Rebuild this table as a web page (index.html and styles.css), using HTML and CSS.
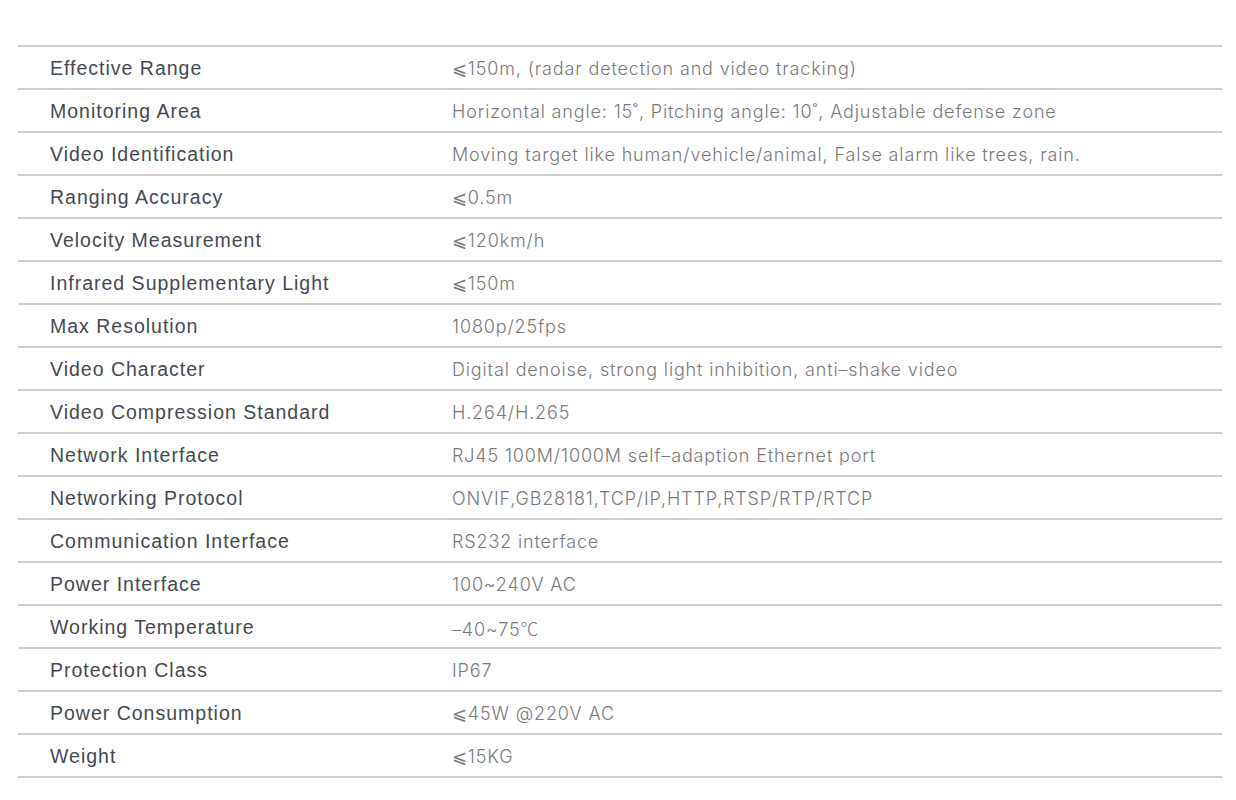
FILE: index.html
```html
<!DOCTYPE html>
<html lang="en">
<head>
<meta charset="utf-8">
<title>Specifications</title>
<link rel="stylesheet" href="styles.css">
</head>
<body>
<div class="spec">
  <div class="row"><div class="k">Effective Range</div><div class="v">⩽150m, (radar detection and video tracking)</div></div>
  <div class="row"><div class="k">Monitoring Area</div><div class="v">Horizontal angle: 15˚, Pitching angle: 10˚, Adjustable defense zone</div></div>
  <div class="row"><div class="k">Video Identification</div><div class="v">Moving target like human/vehicle/animal, False alarm like trees, rain.</div></div>
  <div class="row"><div class="k">Ranging Accuracy</div><div class="v">⩽0.5m</div></div>
  <div class="row"><div class="k">Velocity Measurement</div><div class="v">⩽120km/h</div></div>
  <div class="row"><div class="k">Infrared Supplementary Light</div><div class="v">⩽150m</div></div>
  <div class="row"><div class="k">Max Resolution</div><div class="v">1080p/25fps</div></div>
  <div class="row"><div class="k">Video Character</div><div class="v">Digital denoise, strong light inhibition, anti–shake video</div></div>
  <div class="row"><div class="k">Video Compression Standard</div><div class="v">H.264/H.265</div></div>
  <div class="row"><div class="k">Network Interface</div><div class="v">RJ45 100M/1000M self–adaption Ethernet port</div></div>
  <div class="row"><div class="k">Networking Protocol</div><div class="v">ONVIF,GB28181,TCP/IP,HTTP,RTSP/RTP/RTCP</div></div>
  <div class="row"><div class="k">Communication Interface</div><div class="v">RS232 interface</div></div>
  <div class="row"><div class="k">Power Interface</div><div class="v">100~240V AC</div></div>
  <div class="row"><div class="k">Working Temperature</div><div class="v">–40~75<span class="deg">℃</span></div></div>
  <div class="row"><div class="k">Protection Class</div><div class="v">IP67</div></div>
  <div class="row"><div class="k">Power Consumption</div><div class="v">⩽45W @220V AC</div></div>
  <div class="row"><div class="k">Weight</div><div class="v">⩽15KG</div></div>
</div>
</body>
</html>
```
FILE: styles.css
```css
html, body {
  margin: 0;
  padding: 0;
  background: #ffffff;
}
body {
  padding: 45px 14px 0 18px;
  font-family: "Liberation Sans", Arial, sans-serif;
}
.spec {
  border-top: 2px solid #cdcdcd;
}
.row {
  display: grid;
  grid-template-columns: 434px 1fr;
  align-items: center;
  height: 41px;
  border-bottom: 2px solid #cdcdcd;
}
.k {
  padding-top: 2px;
  padding-left: 32px;
  font-size: 19.5px;
  letter-spacing: 1px;
  color: #454a52;
}
.v {
  padding-top: 2px;
  font-family: "Inter", "Liberation Sans", sans-serif;
  font-size: 18px;
  font-weight: 300;
  letter-spacing: 0.85px;
  color: #7a7a7a;
}
.deg {
  font-family: "Noto Sans CJK SC", sans-serif;
  font-weight: 300;
}
```
